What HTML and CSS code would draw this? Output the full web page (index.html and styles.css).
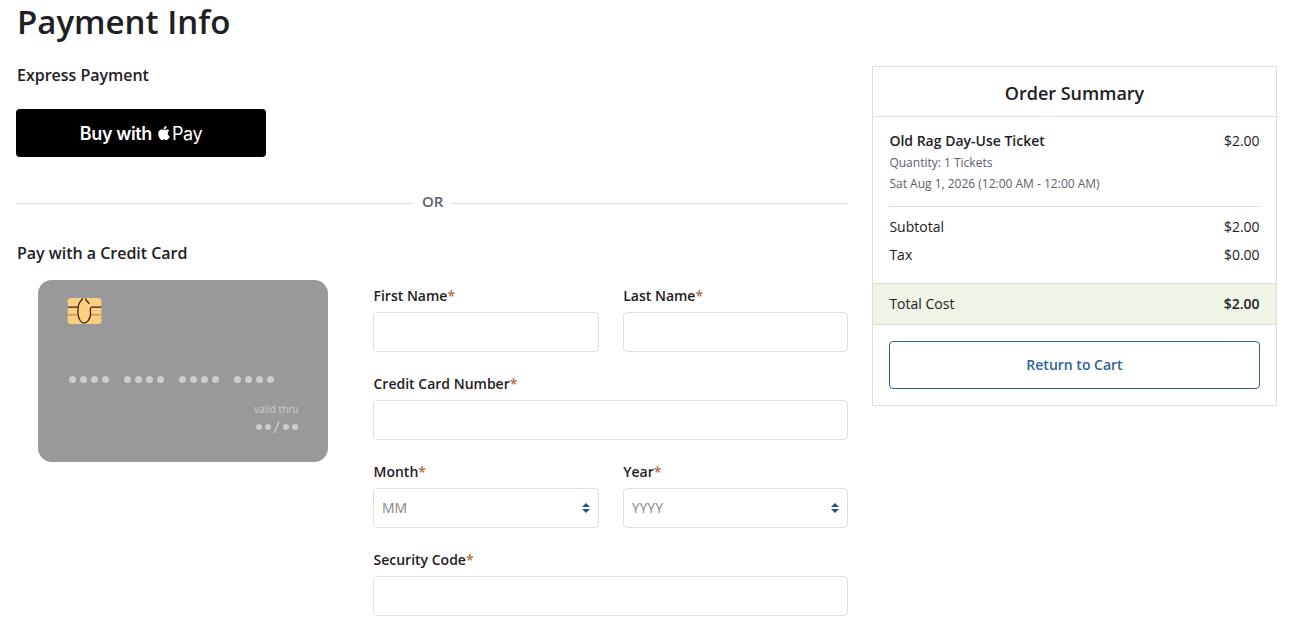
FILE: index.html
```html
<!DOCTYPE html>
<html lang="en">
<head>
    <meta charset="UTF-8">
    <meta name="viewport" content="width=device-width, initial-scale=1.0">
    <title>Payment Info</title>
    <link rel="stylesheet" href="styles.css">
</head>
<body>
    <h1>Payment Info</h1>

    <div class="page-grid">
        <main>
            <h2>Express Payment</h2>
            <button type="button" class="apple-pay">
                <span class="buy-with">Buy with</span>
                <svg class="apple-logo" viewBox="0 0 24 28" aria-hidden="true">
                    <path d="M17.1 0c.2 2-.6 3.700-1.700 5-1.200 1.300-2.700 2-4.200 1.900-.2-1.900.6-3.600 1.600-4.700C13.900.9 15.700.1 17.100 0zM22.700 9.500c-2.200 1.400-3.200 3.200-3.200 5.300 0 2.600 1.500 4.600 4.100 5.700-.8 2.100-1.800 3.900-3.200 5.600-1.100 1.300-2.100 1.900-3.400 1.900-1.700 0-2.500-1-4.500-1-2.100 0-2.900 1-4.500 1-1.500 0-2.600-.8-3.900-2.500C1.600 22.600.4 18.900.4 15.500.4 10.300 3.600 7 7.300 7c2.100 0 3.500 1.200 5.200 1.200 1.600 0 2.800-1.300 5.300-1.300 1.900 0 3.700.9 4.900 2.600z"/>
                </svg>
                <span class="pay">Pay</span>
            </button>

            <div class="divider"><span>OR</span></div>

            <h2>Pay with a Credit Card</h2>
            <div class="card-section">
                <div class="card-preview">
                    <svg class="chip" viewBox="0 0 35 27" aria-hidden="true">
                        <rect width="35" height="27" rx="3.500" fill="#fbcf7f"/>
                        <path d="M0 17.500h10M24 17.500h11" stroke="#b9744a" stroke-width="1" fill="none"/>
                        <path d="M0 9.500h11M35 9.500H24.500c-2 1.500-.5 4-.7 7.500-.5 5-3.800 9-6.800 9s-5.700-4-6.200-9c-.5-3 .2-5 .2-8 .5-3 2.500-6.500 5-8.500M18.500.5c.5 2 2.500 3.500 4 5.500" stroke="#3a211c" stroke-width="1.300" fill="none"/>
                    </svg>
                    <div class="card-number">
                        <span class="dots"><i></i><i></i><i></i><i></i></span>
                        <span class="dots"><i></i><i></i><i></i><i></i></span>
                        <span class="dots"><i></i><i></i><i></i><i></i></span>
                        <span class="dots"><i></i><i></i><i></i><i></i></span>
                    </div>
                    <div class="card-expiry">
                        <div class="valid-thru">valid thru</div>
                        <div class="expiry-date"><i></i><i></i><b>/</b><i></i><i></i></div>
                    </div>
                </div>

                <form class="card-form">
                    <div class="form-group">
                        <label for="first-name">First Name<em>*</em></label>
                        <input type="text" id="first-name" required>
                    </div>
                    <div class="form-group">
                        <label for="last-name">Last Name<em>*</em></label>
                        <input type="text" id="last-name" required>
                    </div>
                    <div class="form-group wide">
                        <label for="card-number">Credit Card Number<em>*</em></label>
                        <input type="text" id="card-number" required>
                    </div>
                    <div class="form-group">
                        <label for="month">Month<em>*</em></label>
                        <div class="select-wrap">
                            <select id="month"><option>MM</option></select>
                            <svg class="sort" viewBox="0 0 8 10" aria-hidden="true"><path d="M4 0l4 4H0zM4 10L0 6h8z"/></svg>
                        </div>
                    </div>
                    <div class="form-group">
                        <label for="year">Year<em>*</em></label>
                        <div class="select-wrap">
                            <select id="year"><option>YYYY</option></select>
                            <svg class="sort" viewBox="0 0 8 10" aria-hidden="true"><path d="M4 0l4 4H0zM4 10L0 6h8z"/></svg>
                        </div>
                    </div>
                    <div class="form-group wide">
                        <label for="security-code">Security Code<em>*</em></label>
                        <input type="text" id="security-code" required>
                    </div>
                </form>
            </div>
        </main>

        <aside class="summary">
            <h3>Order Summary</h3>
            <div class="summary-body">
                <div class="item">
                    <div class="line"><strong>Old Rag Day-Use Ticket</strong><span>$2.00</span></div>
                    <p>Quantity: 1 Tickets</p>
                    <p>Sat Aug 1, 2026 (12:00 AM - 12:00 AM)</p>
                </div>
                <div class="line cost"><span>Subtotal</span><span>$2.00</span></div>
                <div class="line cost"><span>Tax</span><span>$0.00</span></div>
            </div>
            <div class="line total"><span>Total Cost</span><strong>$2.00</strong></div>
            <div class="summary-footer">
                <button type="button" class="return-btn">Return to Cart</button>
            </div>
        </aside>
    </div>
</body>
</html>
```
FILE: styles.css
```css
* {
    box-sizing: border-box;
}

body {
    font-family: "Open Sans", sans-serif;
    font-size: 14px;
    color: #1e2024;
    margin: 0;
    padding: 0 16.400px 0 16px;
    height: 626px;
    overflow: hidden;
    background-color: #fff;
}

h1 {
    font-size: 33px;
    font-weight: 600;
    line-height: 44px;
    margin: 0 0 22px;
    padding-left: 1px;
}

h2 {
    font-size: 16px;
    font-weight: 600;
    line-height: 18px;
    margin: 0;
    padding-left: 1px;
    letter-spacing: -0.02px;
}

.page-grid {
    display: grid;
    grid-template-columns: repeat(12, 1fr);
    column-gap: 24px;
    align-items: start;
}

main {
    grid-column: span 8;
}

/* Express payment */
.apple-pay {
    display: flex;
    align-items: center;
    justify-content: center;
    width: 250px;
    height: 48px;
    margin: 25px 0 36px;
    padding: 0;
    border: none;
    border-radius: 4px;
    background-color: #000;
    color: #fff;
    font-family: Inter, sans-serif;
    font-size: 18px;
    cursor: pointer;
}

.buy-with {
    font-weight: 600;
    letter-spacing: -0.4px;
}

.apple-logo {
    width: 12px;
    height: 14px;
    margin: 0 2px 0 6px;
    fill: #fff;
}

.pay {
    letter-spacing: -0.4px;
}

.divider {
    display: flex;
    align-items: center;
    gap: 8px;
    height: 20px;
    margin-bottom: 31px;
    font-size: 15px;
    font-weight: 600;
    line-height: 16px;
    color: #5a616b;
}

.divider span {
    padding: 0 0 4px 1px;
}

.divider::before,
.divider::after {
    content: "";
    flex: 1;
    height: 1px;
    background-color: #dcdee0;
}

/* Credit card */
.card-section {
    display: grid;
    grid-template-columns: 333px 1fr;
    column-gap: 24px;
    margin-top: 18px;
}

.card-preview {
    width: 290px;
    height: 182px;
    margin: 0 auto;
    padding: 18px 29px;
    border-radius: 14px;
    background-color: #999;
    color: #ccc;
}

.chip {
    display: block;
    width: 35px;
    height: 26px;
}

.card-number {
    display: flex;
    gap: 15px;
    margin: 52px 0 0 2px;
}

.dots {
    display: flex;
    gap: 4px;
}

.dots i {
    width: 7px;
    height: 7px;
    border-radius: 50%;
    background-color: #ccc;
}

.card-expiry {
    display: flex;
    flex-direction: column;
    align-items: flex-end;
    margin-top: 19px;
}

.valid-thru {
    font-size: 10px;
    line-height: 14px;
}

.expiry-date {
    display: flex;
    align-items: center;
    gap: 3px;
    height: 18px;
    margin: 2px 1px 0 0;
}

.expiry-date i {
    width: 6px;
    height: 6px;
    border-radius: 50%;
    background-color: #ccc;
}

.expiry-date b {
    width: 6px;
    font-size: 17px;
    font-weight: 400;
    line-height: 18px;
    text-align: center;
}

.card-form {
    display: grid;
    grid-template-columns: 1fr 1fr;
    gap: 22px 24px;
    padding-top: 6px;
}

.wide {
    grid-column: span 2;
}

label {
    display: block;
    margin-bottom: 6px;
    padding-left: 0.500px;
    font-weight: 600;
    font-size: 14px;
    line-height: 20px;
}

label em {
    color: #b06a45;
    font-style: normal;
}

input,
select {
    display: block;
    width: 100%;
    height: 40px;
    padding: 0 8px;
    border: 1px solid #dcdee0;
    border-radius: 4px;
    background-color: #fff;
    font-family: inherit;
    font-size: 14px;
}

select {
    appearance: none;
    padding-bottom: 1px;
    color: #858585;
}

.select-wrap {
    position: relative;
}

.sort {
    position: absolute;
    top: 15px;
    right: 9px;
    width: 8px;
    height: 10px;
    fill: #205493;
}

/* Order summary */
.summary {
    grid-column: span 4;
    border: 1px solid #dcdee0;
}

.summary h3 {
    margin: 0;
    border-bottom: 1px solid #dcdee0;
    font-size: 18px;
    font-weight: 600;
    line-height: 48px;
    padding-top: 2px;
    height: 50px;
    text-align: center;
}

.summary-body {
    padding: 14px 16px;
}

.line {
    display: flex;
    justify-content: space-between;
    line-height: 20px;
}

.line strong {
    font-weight: 600;
}

.item {
    padding-bottom: 12px;
    margin-bottom: 6px;
    border-bottom: 1px solid #dcdee0;
}

.item p {
    margin: 1px 0 0;
    font-size: 12px;
    line-height: 20px;
    color: #5a616b;
}

.item .line {
    margin-bottom: 2px;
}

.cost {
    line-height: 28px;
}

.total {
    padding: 10px 16px;
    border-top: 1px solid #dcdee0;
    border-bottom: 1px solid #dcdee0;
    background-color: #eef4e6;
}

.summary-footer {
    padding: 16px;
}

.return-btn {
    display: block;
    width: 100%;
    height: 48px;
    padding-bottom: 3px;
    border: 1px solid #2e6396;
    border-radius: 4px;
    background-color: #fff;
    color: #2e6396;
    font-family: inherit;
    font-size: 14px;
    font-weight: 600;
    cursor: pointer;
}
```
